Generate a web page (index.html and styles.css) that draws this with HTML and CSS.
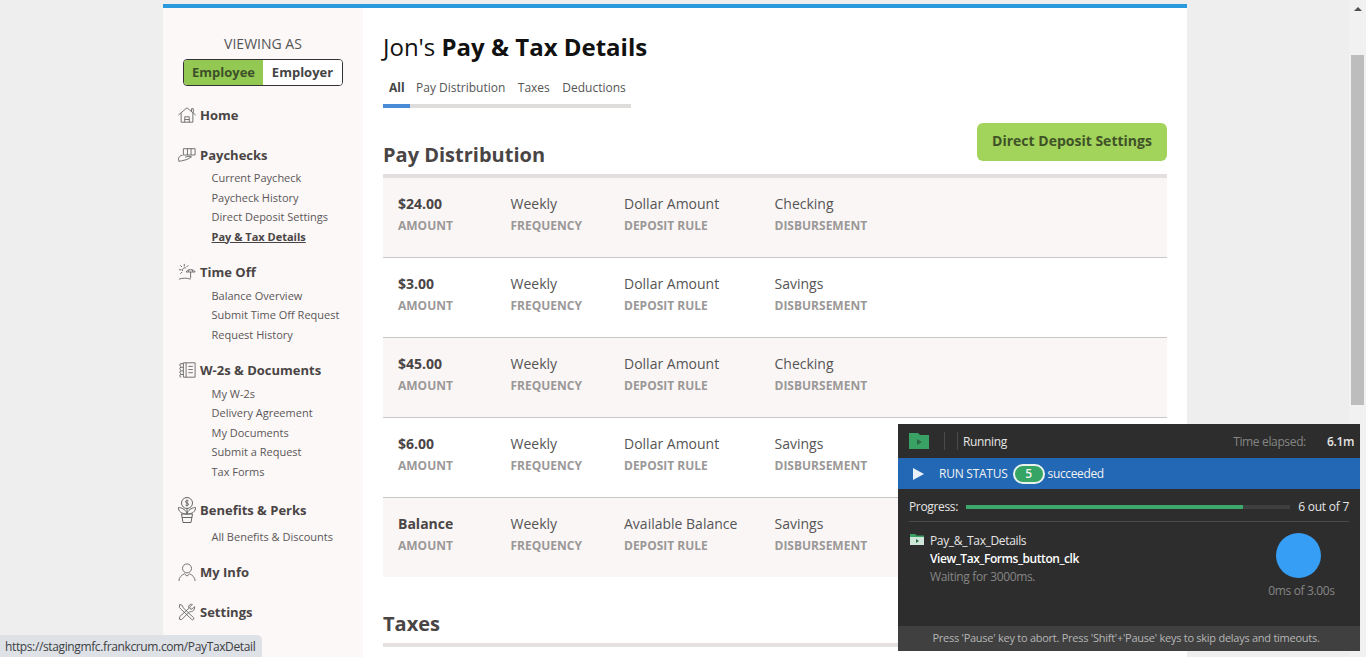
FILE: index.html
```html
<!DOCTYPE html>
<html>

	<head>
		<meta http-equiv="Content-Type" content="text/html; charset=utf-8">
		<title>Pay &amp; Tax Details</title>
		<link rel="stylesheet" href="styles.css">
	</head>

	<body>
		<div class="page">
			<div class="wrap">
				<div class="sidebar">
					<div class="viewing">VIEWING AS</div>
					<div class="toggle">
						<span class="toggle-on">Employee</span>
						<span class="toggle-off">Employer</span>
					</div>

					<div class="nav-head nav-home">
						<svg class="nav-icon" viewBox="0 0 20 20"><path d="M.5 10 10 2l9.500 8M15 6V3h2v4.500M3.500 8v10h13V8M7.500 18v-6h5v6M7.500 15h5"/></svg>
						Home
					</div>

					<div class="nav-head nav-paychecks">
						<svg class="nav-icon" viewBox="0 0 20 20"><path d="M6 3h13v7H6zM10.500 3v7M14.500 3v7M5 10.500H3l-2.500 3L1 17l3-.5 6-1.500 5-3-4-.5-3 1"/></svg>
						Paychecks
					</div>
					<ul class="nav-sub">
						<li>Current Paycheck</li>
						<li>Paycheck History</li>
						<li>Direct Deposit Settings</li>
						<li class="current">Pay &amp; Tax Details</li>
					</ul>

					<div class="nav-head nav-timeoff">
						<svg class="nav-icon" viewBox="0 0 20 20"><path d="M7 1v3M2.500 2.500l2 2M1 7.500h3M2.500 12l2-2M11.500 2.500l-2 2M5 9a3 3 0 0 1 4-3.500M9 10c1-3.500 9-3.500 10 0zM14 10v7M11.500 10l1-2.500M16.500 10l-1-2.500M1 18c4-1.500 9-1.500 13 0"/></svg>
						Time Off
					</div>
					<ul class="nav-sub nav-sub-low">
						<li>Balance Overview</li>
						<li>Submit Time Off Request</li>
						<li>Request History</li>
					</ul>

					<div class="nav-head nav-docs">
						<svg class="nav-icon" viewBox="0 0 20 20"><path d="M6 2h13v16H6zM9 2v16M11.500 6h5M11.500 9.500h5M11.500 13h5M3.500 3a1.500 1.500 0 1 0 0 3M3.500 7a1.500 1.500 0 1 0 0 3M3.500 11a1.500 1.500 0 1 0 0 3M3.500 15a1.500 1.500 0 1 0 0 3M3 3h3M3 7h3M3 11h3M3 15h3"/></svg>
						W-2s &amp; Documents
					</div>
					<ul class="nav-sub nav-sub-low">
						<li>My W-2s</li>
						<li>Delivery Agreement</li>
						<li>My Documents</li>
						<li>Submit a Request</li>
						<li>Tax Forms</li>
					</ul>

					<div class="nav-head nav-benefits">
						<svg class="nav-icon nav-icon-tall" viewBox="0 0 20 26"><circle cx="10" cy="6" r="5.500"/><path d="M8.500 8c1 .8 3 .8 3-.8 0-1.700-3-.7-3-2.400 0-1.500 2-1.500 3-.8M10 2.500v7M10 11.500v6M10 16C8 12 4 10.500 1.500 10.500c0 4 3 6.500 8.500 6.500 5.500 0 8.500-2.500 8.500-6.500-2.500 0-6.500 1.500-8.500 5.500M4.500 17h11L14 25.500H6zM5 20.500h10"/></svg>
						Benefits &amp; Perks
					</div>
					<ul class="nav-sub nav-sub-benefits">
						<li>All Benefits &amp; Discounts</li>
					</ul>

					<div class="nav-head nav-info">
						<svg class="nav-icon nav-icon-big" viewBox="0 0 20 20"><circle cx="10" cy="6" r="5"/><path d="M1 20c0-4 3-6.500 6-8l3 2.500 3-2.500c3 1.500 6 4 6 8"/></svg>
						My Info
					</div>

					<div class="nav-head nav-settings">
						<svg class="nav-icon nav-icon-big" viewBox="0 0 20 20"><path d="M2 1.500 5 3l.5 2L17.500 16.500a1.500 1.500 0 0 1-2 2L3.500 7 1.500 5zM18.500 4l-3 3-2-.5-.5-2 3-3c-3-.5-5 1.500-4 4.500L2 15l-.5 3L4 18.500l9-9c3 1 5.500-1.500 5.500-5.500z"/></svg>
						Settings
					</div>
				</div>

				<div class="main">
					<h1 class="title">Jon's <b>Pay &amp; Tax Details</b></h1>
					<div class="tabs">
						<span class="tab tab-on">All</span>
						<span class="tab">Pay Distribution</span>
						<span class="tab">Taxes</span>
						<span class="tab">Deductions</span>
					</div>

					<div class="section-head">
						<h2 class="section-title">Pay Distribution</h2>
						<a class="btn">Direct Deposit Settings</a>
					</div>

					<div class="rows">
						<div class="row">
							<div class="cell cell-amount"><strong>$24.00</strong><small>AMOUNT</small></div>
							<div class="cell cell-freq">Weekly<small>FREQUENCY</small></div>
							<div class="cell cell-rule">Dollar Amount<small>DEPOSIT RULE</small></div>
							<div class="cell">Checking<small>DISBURSEMENT</small></div>
						</div>
						<div class="row">
							<div class="cell cell-amount"><strong>$3.00</strong><small>AMOUNT</small></div>
							<div class="cell cell-freq">Weekly<small>FREQUENCY</small></div>
							<div class="cell cell-rule">Dollar Amount<small>DEPOSIT RULE</small></div>
							<div class="cell">Savings<small>DISBURSEMENT</small></div>
						</div>
						<div class="row">
							<div class="cell cell-amount"><strong>$45.00</strong><small>AMOUNT</small></div>
							<div class="cell cell-freq">Weekly<small>FREQUENCY</small></div>
							<div class="cell cell-rule">Dollar Amount<small>DEPOSIT RULE</small></div>
							<div class="cell">Checking<small>DISBURSEMENT</small></div>
						</div>
						<div class="row">
							<div class="cell cell-amount"><strong>$6.00</strong><small>AMOUNT</small></div>
							<div class="cell cell-freq">Weekly<small>FREQUENCY</small></div>
							<div class="cell cell-rule">Dollar Amount<small>DEPOSIT RULE</small></div>
							<div class="cell">Savings<small>DISBURSEMENT</small></div>
						</div>
						<div class="row">
							<div class="cell cell-amount"><strong>Balance</strong><small>AMOUNT</small></div>
							<div class="cell cell-freq">Weekly<small>FREQUENCY</small></div>
							<div class="cell cell-rule">Available Balance<small>DEPOSIT RULE</small></div>
							<div class="cell">Savings<small>DISBURSEMENT</small></div>
						</div>
					</div>

					<h2 class="section-title taxes">Taxes</h2>
					<div class="taxes-line"></div>
				</div>
			</div>
		</div>

		<div class="scrollbar">
			<div class="scroll-arrow"></div>
			<div class="scroll-thumb"></div>
		</div>

		<div class="status-url">https://stagingmfc.frankcrum.com/PayTaxDetail</div>

		<div class="runner">
			<div class="runner-top">
				<svg class="runner-folder" viewBox="0 0 20 16"><path class="folder-body" d="M0 0h9l2 2h9v14H0z"/><path class="folder-play" d="M8 6l5 3-5 3z"/></svg>
				<span class="runner-sep"></span>
				<span class="runner-sep"></span>
				<span class="runner-state">Running</span>
				<span class="runner-label">Time elapsed:</span>
				<span class="runner-time">6.1m</span>
			</div>
			<div class="runner-status">
				<span class="play"></span>
				<span class="status-text">RUN STATUS</span>
				<span class="status-pill">5</span>
				<span>succeeded</span>
			</div>
			<div class="runner-progress">
				<span class="bar-label">Progress:</span>
				<div class="bar"><div class="bar-fill" style="width: 85.500%"></div></div>
				<span class="bar-count">6 out of 7</span>
			</div>
			<div class="runner-body">
				<svg class="step-folder" viewBox="0 0 14 11"><path class="step-folder-tab" d="M0 0h5l1.500 1.500H14V11H0z"/><path class="step-folder-page" d="M0 3h14v8H0z"/><path class="step-folder-play" d="M6 5l3 2-3 2z"/></svg>
				<div class="step">
					<div>Pay_&amp;_Tax_Details</div>
					<div class="step-name">View_Tax_Forms_button_clk</div>
					<div class="step-wait">Waiting for 3000ms.</div>
				</div>
				<div class="timer">
					<div class="timer-circle"></div>
					<div class="timer-text">0ms of 3.00s</div>
				</div>
			</div>
			<div class="runner-foot">Press 'Pause' key to abort. Press 'Shift'+'Pause' keys to skip delays and timeouts.</div>
		</div>
	</body>

</html>
```

FILE: styles.css
```css
* {
	margin: 0;
	padding: 0;
	box-sizing: border-box;
}

html,
body {
	height: 100%;
	overflow: hidden;
}

body {
	display: flex;
	background: #eeeeee;
	font-family: "Open Sans", "Noto Sans", sans-serif;
	color: #4a4545;
}

.page {
	flex: 1;
	height: 100%;
	padding-top: 4px;
	padding-left: 163px;
}

.wrap {
	width: 1024px;
	height: 900px;
	display: flex;
	background: #fff;
	border-top: 4px solid #2a9ade;
}

/* sidebar */
.sidebar {
	width: 200px;
	padding-top: 26px;
	background: #fbf8f7;
}

.viewing {
	text-align: center;
	font-size: 14px;
	line-height: 19px;
	color: #555;
}

.toggle {
	display: flex;
	width: 160px;
	height: 27px;
	margin: 6px 0 0 20px;
	border: 1px solid #333;
	border-radius: 4px;
	overflow: hidden;
	font-size: 13px;
	font-weight: 700;
	line-height: 25px;
	text-align: center;
}

.toggle-on {
	width: 79px;
	background: #93c852;
	color: #3d5029;
}

.toggle-off {
	flex: 1;
	background: #fff;
	color: #444;
}

.nav-head {
	display: flex;
	align-items: center;
	gap: 4px;
	height: 20px;
	padding-left: 15px;
	font-size: 13px;
	font-weight: 700;
	color: #4a4545;
}

.nav-icon {
	width: 18px;
	height: 18px;
	flex: none;
	fill: none;
	stroke: #666;
	stroke-width: 1;
}

.nav-icon-tall {
	width: 20px;
	height: 26px;
	margin: 0 -1px;
}

.nav-icon-big {
	height: 20px;
}

.nav-home {
	margin-top: 19px;
}

.nav-paychecks {
	margin-top: 20px;
}

.nav-timeoff {
	margin-top: 15.750px;
}

.nav-docs {
	margin-top: 15.250px;
}

.nav-benefits {
	margin-top: 19px;
}

.nav-info {
	margin-top: 15px;
}

.nav-settings {
	margin-top: 20px;
}

.nav-sub {
	list-style: none;
	margin-top: 3px;
	padding-left: 48.500px;
	font-size: 11px;
	line-height: 19.500px;
	color: #5c5757;
}

.nav-sub-low {
	margin-top: 4px;
}

.nav-sub-benefits {
	margin-top: 7px;
}

.nav-sub .current {
	font-weight: 700;
	text-decoration: underline;
	color: #4a4545;
}

/* main column */
.main {
	flex: 1;
	padding: 0 20px;
}

.title {
	margin-top: 23px;
	font-size: 24px;
	font-weight: 400;
	line-height: 31px;
	margin-left: -1px;
	padding-left: 1px;
	color: #111;
}

.title b {
	font-weight: 700;
}

.tabs {
	display: flex;
	width: 248px;
	height: 30px;
	margin-top: 16px;
	border-bottom: 4px solid #dfdcdc;
	font-size: 12px;
	line-height: 20px;
	color: #555;
	white-space: nowrap;
}

.tab {
	flex: none;
	height: 30px;
	margin-right: 12.500px;
}

.tab:last-child {
	margin-right: 0;
}

.tab-on {
	width: 27px;
	margin-right: 6px;
	padding-left: 6px;
	border-bottom: 4px solid #4a8bd8;
	font-weight: 700;
	color: #444;
}

.section-head {
	display: flex;
	justify-content: space-between;
	align-items: flex-end;
	height: 70px;
	border-bottom: 4px solid #e4dfdf;
	padding-bottom: 6px;
}

.section-title {
	font-size: 20px;
	font-weight: 700;
	line-height: 27px;
	color: #4a4545;
}

.btn {
	width: 190px;
	height: 38px;
	margin-bottom: 7px;
	background: #a2d35a;
	border-radius: 6px;
	font-size: 14px;
	font-weight: 700;
	line-height: 36px;
	text-align: center;
	color: #3f5228;
}

.row {
	display: flex;
	height: 80px;
	padding: 15px 0 0 15px;
	border-bottom: 1px solid #c9c7c7;
	font-size: 14px;
	line-height: 21px;
	color: #555;
}

.row:nth-child(odd) {
	background: #faf6f5;
}

.row:last-child {
	height: 79px;
	border-bottom: 0;
}

.cell small {
	display: block;
	margin-top: 1px;
	font-size: 12px;
	font-weight: 700;
	color: #9b9898;
}

.cell strong {
	color: #4a4545;
}

.cell-amount {
	width: 112.500px;
}

.cell-freq {
	width: 113.500px;
}

.cell-rule {
	width: 150.500px;
}

.taxes {
	margin-top: 33px;
}

.taxes-line {
	height: 4px;
	margin-top: 6px;
	background: #e4e1e0;
}

/* fake browser scrollbar */
.scrollbar {
	width: 17px;
	height: 100%;
	flex: none;
	background: #f1f1f1;
}

.scroll-arrow {
	width: 0;
	height: 0;
	margin: 7px 0 0 5px;
	border: 4px solid transparent;
	border-top: 0;
	border-bottom: 4px solid #505050;
}

.scroll-thumb {
	width: 13px;
	height: 350px;
	margin: 44px 0 0 2px;
	background: #bdbdbd;
}

.status-url {
	position: fixed;
	left: 0;
	bottom: 0;
	width: 262px;
	height: 22px;
	padding-left: 5px;
	background: #dee1e6;
	border-top-right-radius: 5px;
	font-size: 12px;
	line-height: 23px;
	letter-spacing: -0.37px;
	color: #3c4043;
	white-space: nowrap;
}

/* runner popup */
.runner {
	position: fixed;
	left: 898px;
	top: 424px;
	width: 462px;
	height: 227px;
	display: flex;
	flex-direction: column;
	background: #2d2d2d;
	font-size: 12px;
	letter-spacing: -0.35px;
	color: #e6e6e6;
	white-space: nowrap;
}

.runner-top {
	display: flex;
	align-items: center;
	height: 34px;
	padding: 0 6px 0 11px;
}

.runner-folder {
	width: 20px;
	height: 16px;
	margin-right: 15px;
}

.folder-body {
	fill: #3aa164;
}

.folder-play {
	fill: #2a6b45;
}

.runner-sep {
	width: 1px;
	height: 18px;
	margin-right: 12px;
	background: #4a4a4a;
}

.runner-sep + .runner-sep {
	margin-right: 5px;
}

.runner-state {
	flex: 1;
}

.runner-label {
	margin-right: 21px;
	color: #858585;
}

.runner-time {
	font-weight: 600;
}

.runner-status {
	display: flex;
	align-items: center;
	height: 31px;
	padding-left: 15px;
	background: #2268b5;
	color: #f2f2f2;
}

.play {
	width: 0;
	height: 0;
	margin-right: 15px;
	border-left: 11px solid #e8f0fa;
	border-top: 6px solid transparent;
	border-bottom: 6px solid transparent;
}

.status-text {
	margin-right: 5px;
	letter-spacing: -0.25px;
}

.status-pill {
	width: 32px;
	height: 20px;
	margin-right: 3px;
	background: #35a465;
	border: 2px solid #e8f3ec;
	border-radius: 10px;
	font-weight: 600;
	line-height: 16px;
	text-align: center;
}

.runner-progress {
	display: flex;
	align-items: center;
	height: 33px;
	margin: 0 11px;
	padding-top: 3px;
	border-bottom: 1px solid #4a4a4a;
}

.bar-label {
	width: 57px;
}

.bar {
	width: 324px;
	height: 4px;
	background: #3f3f3f;
}

.bar-fill {
	height: 4px;
	background: #3ca86a;
}

.bar-count {
	margin-left: auto;
	letter-spacing: -0.25px;
}

.runner-body {
	flex: 1;
	display: flex;
	padding: 10px 0 0 12px;
	line-height: 18px;
}

.step-folder {
	width: 14px;
	height: 11px;
	margin: 2px 6px 0 0;
}

.step-folder-tab {
	fill: #3aa164;
}

.step-folder-page {
	fill: #cfe6d8;
}

.step-folder-play {
	fill: #2a6b45;
}

.step {
	flex: 1;
}

.step-name {
	font-weight: 600;
	letter-spacing: -0.45px;
	color: #fff;
}

.step-wait {
	color: #858585;
}

.timer {
	width: 100px;
	margin-right: 11px;
	text-align: center;
	color: #858585;
}

.timer-circle {
	width: 45px;
	height: 45px;
	margin: 1px 0 4px 27px;
	background: #369ef5;
	border-radius: 50%;
}

.timer-text {
	padding-left: 5px;
	line-height: 18px;
}

.runner-foot {
	height: 25px;
	padding-right: 6px;
	background: #404040;
	font-size: 11px;
	line-height: 24px;
	letter-spacing: -0.26px;
	text-align: center;
	color: #b5b5b5;
}
```
